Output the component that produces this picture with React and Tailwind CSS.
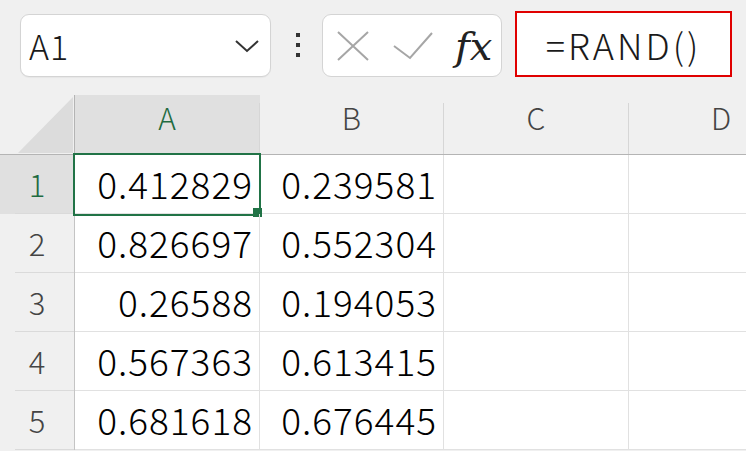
const font = { fontFamily: '"Noto Sans CJK JP", "Noto Sans", sans-serif' }

const rows = [
  ['0.412829', '0.239581'],
  ['0.826697', '0.552304'],
  ['0.26588', '0.194053'],
  ['0.567363', '0.613415'],
  ['0.681618', '0.676445'],
]

const cols = ['A', 'B', 'C', 'D']

function HeaderCell({ label, active }) {
  return (
    <div className={`flex h-full border-b border-[#b4b4b4] ${active ? 'bg-[#e0e0e0]' : 'bg-[#f0f0f0]'}`}>
      <div className={`flex-1 pt-[4px] text-center text-[30px] font-light leading-[36px] ${active ? 'text-[#1f6b41]' : 'text-[#444]'}`}>
        {label}
      </div>
      <div className="mt-[8px] w-px bg-[#d6d6d6]" />
    </div>
  )
}

export default function App() {
  return (
    <div className="h-[451px] w-[746px] overflow-hidden bg-[#f0f0f0]" style={font}>
      <div className="flex h-[95px] items-start">
        <div className="ml-[20px] mt-[14px] flex h-[63px] w-[251px] items-center justify-between rounded-[9px] border border-[#d4d4d4] bg-white pl-[8px] pr-[10px] shadow-[0_1px_1px_rgba(0,0,0,0.04)]">
          <span className="text-[34px] font-light leading-none tracking-[1px] text-[#1a1a1a]">A1</span>
          <svg width="26" height="14" viewBox="0 0 26 14">
            <path d="M2 2 L13 12 L24 2" fill="none" stroke="#333" strokeWidth="2" />
          </svg>
        </div>
        <div className="ml-[25px] mt-[33px] flex flex-col gap-[6px]">
          <span className="h-[4px] w-[4px] bg-[#333]" />
          <span className="h-[4px] w-[4px] bg-[#333]" />
          <span className="h-[4px] w-[4px] bg-[#333]" />
        </div>
        <div className="ml-[22px] mt-[14px] flex h-[63px] w-[180px] items-center rounded-[9px] border border-[#d4d4d4] bg-white pl-[14px]">
          <svg width="32" height="30" viewBox="0 0 32 30">
            <path d="M1 1 L31 29 M31 1 L1 29" stroke="#a6a6a6" strokeWidth="2" fill="none" />
          </svg>
          <svg className="ml-[24px]" width="40" height="28" viewBox="0 0 40 28">
            <path d="M1 14 L17 26 L39 1" stroke="#a6a6a6" strokeWidth="2" fill="none" />
          </svg>
          <span
            className="ml-[22px] text-[40px] italic leading-none text-[#222]"
            style={{ fontFamily: '"DejaVu Serif", "Liberation Serif", serif' }}
          >
            fx
          </span>
        </div>
        <div className="ml-[13px] mt-[11px] flex h-[66px] w-[217px] items-center justify-center border-2 border-[#e00000] bg-white">
          <span className="text-[36px] font-light leading-none tracking-[3px] text-[#1a1a1a]">=RAND()</span>
        </div>
      </div>

      <div className="grid grid-cols-[75px_185px_184px_185px_185px] grid-rows-[60px_59px_59px_59px_59px_59px] bg-white">
        <div className="border-b border-r border-[#b4b4b4] bg-[#f0f0f0]">
          <svg width="74" height="59" viewBox="0 0 74 59">
            <polygon points="73,2 73,58 18,58" fill="#dcdcdc" />
          </svg>
        </div>
        {cols.map((c) => (
          <HeaderCell key={c} label={c} active={c === 'A'} />
        ))}

        {rows.map((r, i) => (
          <div key={i} className="contents">
            <div className={`flex flex-col border-r border-[#c4c4c4] ${i === 0 ? 'bg-[#e0e0e0]' : 'bg-[#f0f0f0]'}`}>
              <div className={`flex flex-1 items-center justify-center text-[31px] font-light ${i === 0 ? 'text-[#1f6b41]' : 'text-[#444]'}`}>
                {i + 1}
              </div>
              <div className="ml-[15px] h-px bg-[#dadada]" />
            </div>
            <div className="relative flex items-center justify-end border-b border-r border-[#e1e1e1] pr-[6px] text-[37px] font-light tracking-[1px] text-black">
              {r[0]}
              {i === 0 && (
                <div className="absolute -left-[2px] -top-[2px] h-[63px] w-[188px] border-2 border-[#217346]">
                  <div className="absolute -bottom-[3px] -right-[3px] h-[9px] w-[9px] bg-[#217346]" />
                </div>
              )}
            </div>
            <div className="flex items-center justify-end border-b border-r border-[#e1e1e1] pr-[6px] text-[37px] font-light tracking-[1px] text-black">
              {r[1]}
            </div>
            <div className="border-b border-r border-[#e1e1e1]" />
            <div className="border-b border-r border-[#e1e1e1]" />
          </div>
        ))}
      </div>
    </div>
  )
}
